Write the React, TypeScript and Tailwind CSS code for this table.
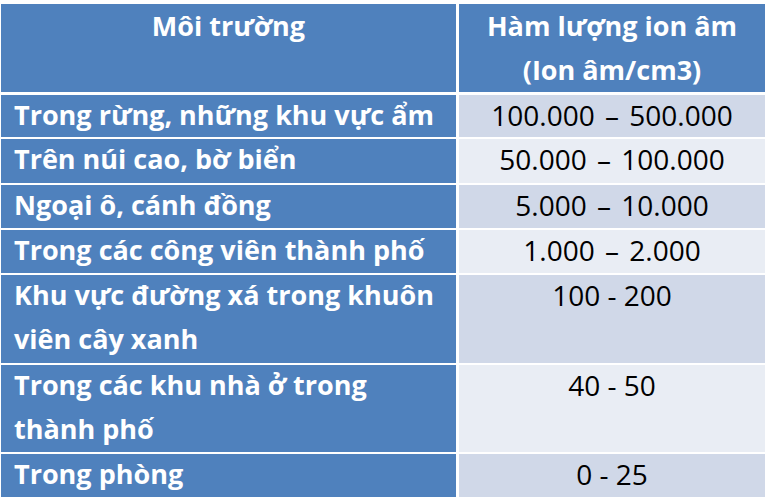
const rows = [
    { env: ['Trong rừng, những khu vực ẩm'], value: '100.000 – 500.000', h: 'h-[42px]', bg: 'bg-[#d0d8e8]', wide: true },
    { env: ['Trên núi cao, bờ biển'], value: '50.000 – 100.000', h: 'h-[44px]', bg: 'bg-[#e9edf4]', wide: true },
    { env: ['Ngoại ô, cánh đồng'], value: '5.000 – 10.000', h: 'h-[43px]', bg: 'bg-[#d0d8e8]', wide: true },
    { env: ['Trong các công viên thành phố'], value: '1.000 – 2.000', h: 'h-[43px]', bg: 'bg-[#e9edf4]', wide: true },
    { env: ['Khu vực đường xá trong khuôn', 'viên cây xanh'], value: '100 - 200', h: 'h-[88px]', bg: 'bg-[#d0d8e8]', wide: false },
    { env: ['Trong các khu nhà ở trong', 'thành phố'], value: '40 - 50', h: 'h-[87px]', bg: 'bg-[#e9edf4]', wide: false },
    { env: ['Trong phòng'], value: '0 - 25', h: 'h-[43px]', bg: 'bg-[#d0d8e8]', wide: false },
];

export default function App() {
    return (
        <div className="w-[768px] h-[500px] bg-white pt-1 pl-px pr-[3px] overflow-hidden font-['Open_Sans',sans-serif]">
            {/* Header */}
            <div className="grid grid-cols-[455px_306px] gap-x-[3px] h-[85px] text-white font-bold text-[27px] leading-[44px]">
                <div className="bg-[#4f81bd] text-center">Môi trường</div>
                <div className="bg-[#4f81bd] text-center">
                    <div>Hàm lượng ion âm</div>
                    <div>(Ion âm/cm3)</div>
                </div>
            </div>
            <div className="mt-[6px] flex flex-col gap-y-[2px]">
                {rows.map((r, i) => (
                    <div key={i} className={`grid grid-cols-[455px_306px] gap-x-[3px] overflow-hidden ${r.h}`}>
                        <div className="bg-[#4f81bd] text-white font-bold text-[27px] leading-[44px] pl-[13px] whitespace-nowrap overflow-hidden">
                            <div className="-mt-[2px]">
                                {r.env.map((l, j) => (
                                    <div key={j}>{l}</div>
                                ))}
                            </div>
                        </div>
                        <div className={`${r.bg} text-black text-[28px] leading-[44px] text-center overflow-hidden`}>
                            <div className={r.wide ? '-mt-[2px] [word-spacing:3px]' : '-mt-[2px]'}>{r.value}</div>
                        </div>
                    </div>
                ))}
            </div>
        </div>
    );
}
